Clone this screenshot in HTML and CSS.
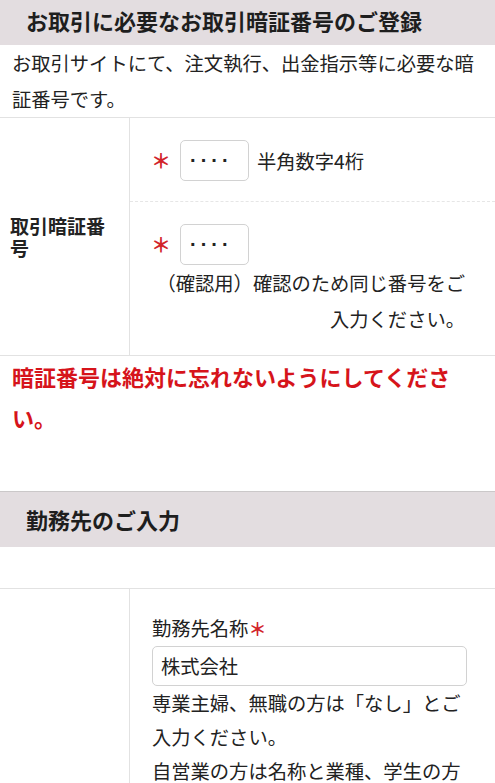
FILE: index.html
```html
<!DOCTYPE html>
<html lang="ja">
<head>
<meta charset="utf-8">
<title>お取引暗証番号のご登録</title>
<link rel="stylesheet" href="styles.css">
</head>
<body>
<section class="block">
  <h2 class="sec-head sec-head-first">お取引に必要なお取引暗証番号のご登録</h2>
  <p class="desc">お取引サイトにて、注文執行、出金指示等に必要な暗証番号です。</p>
  <div class="row row-pin">
    <div class="row-label">取引暗証番号</div>
    <div class="row-body">
      <div class="sub sub-first">
        <span class="req req-pin">＊</span>
        <input class="pin" type="text" value="····" readonly>
        <span class="hint">半角数字4桁</span>
      </div>
      <div class="sub sub-second">
        <div class="pin-line">
          <span class="req req-pin">＊</span>
          <input class="pin" type="text" value="····" readonly>
        </div>
        <p class="confirm">（確認用）確認のため同じ番号をご入力ください。</p>
      </div>
    </div>
  </div>
  <p class="warn">暗証番号は絶対に忘れないようにしてください。</p>
</section>
<section class="block">
  <h2 class="sec-head sec-head-second">勤務先のご入力</h2>
  <div class="spacer"></div>
  <div class="row row-work">
    <div class="row-label"></div>
    <div class="row-body body-work">
      <label class="field-label">勤務先名称<span class="req req-label">＊</span></label>
      <input class="text-input" type="text" value="株式会社" readonly>
      <p class="note">専業主婦、無職の方は「なし」とご入力ください。</p>
      <p class="note">自営業の方は名称と業種、学生の方は学校名をご入力ください。</p>
    </div>
  </div>
</section>
</body>
</html>
```

FILE: styles.css
```css
* {
  box-sizing: border-box;
}

body {
  margin: 0;
  width: 495px;
  font-family: "Noto Sans CJK JP", "Noto Sans", sans-serif;
  color: #222;
  background: #fff;
  text-spacing-trim: space-all;
}

p {
  margin: 0;
}

.sec-head {
  margin: 0;
  background: #e3dde0;
  font-size: 22px;
  font-weight: 700;
  padding-left: 26px;
  color: #1e1e1e;
}

.sec-head-first {
  height: 45px;
  line-height: 40px;
}

.sec-head-second {
  height: 56px;
  line-height: 55px;
  border-top: 1px solid #cbc8c9;
}

.desc {
  font-size: 19.3px;
  line-height: 36px;
  padding: 0 12px;
  border-bottom: 1px solid #e2e2e2;
}

.row {
  display: flex;
  border-bottom: 1px solid #e2e2e2;
}

.row-label {
  width: 130px;
  flex: none;
  border-right: 1px solid #e2e2e2;
  display: flex;
  align-items: center;
  padding: 0 20px 0 10px;
  font-size: 19px;
  font-weight: 700;
  line-height: 22px;
}

.row-body {
  flex: 1;
  min-width: 0;
}

.sub {
  padding-left: 21px;
  padding-right: 30px;
}

.sub-first {
  display: flex;
  align-items: center;
  padding-top: 22px;
  padding-bottom: 20px;
  border-bottom: 1px dashed #e6e6e6;
}

.sub-second {
  padding-top: 22px;
  padding-bottom: 18px;
}

.pin-line {
  display: flex;
  align-items: center;
}

.req {
  color: #d2232a;
  font-weight: 700;
}

.req-pin {
  font-size: 20px;
  line-height: 20px;
  width: 20px;
  margin-right: 9px;
  flex: none;
}

.req-label {
  font-size: 18px;
}

.pin {
  width: 69px;
  height: 41px;
  border: 1px solid #d2d2d2;
  border-radius: 5px;
  padding: 0 0 0 9px;
  font-family: "Liberation Sans", sans-serif;
  font-size: 20px;
  font-weight: 700;
  letter-spacing: 4px;
  color: #222;
  background: #fff;
  outline: none;
}

.hint {
  font-size: 19.3px;
  margin-left: 8px;
}

.confirm {
  font-size: 19.3px;
  line-height: 36px;
  text-align: right;
}

.warn {
  color: #d6141b;
  font-size: 22px;
  font-weight: 700;
  line-height: 41px;
  padding: 0 30px 53px 12px;
}

.spacer {
  height: 42px;
  border-bottom: 1px solid #e2e2e2;
}

.row-work {
  border-bottom: none;
}

.body-work {
  padding: 21px 28px 0 22px;
}

.field-label {
  display: block;
  font-size: 19.3px;
  line-height: 36px;
}

.text-input {
  display: block;
  width: 100%;
  height: 40px;
  border: 1px solid #d2d2d2;
  border-radius: 5px;
  padding: 0 8px;
  font-family: "Noto Sans CJK JP", sans-serif;
  font-size: 19.3px;
  color: #222;
  background: #fff;
  outline: none;
}

.note {
  font-size: 19.3px;
  line-height: 34px;
}
```
